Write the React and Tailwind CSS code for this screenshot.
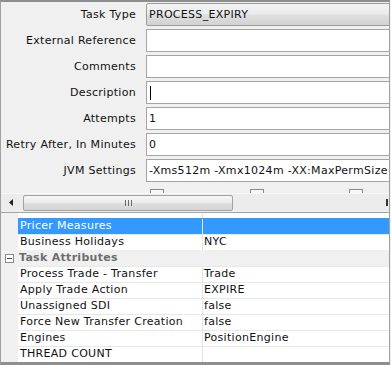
import React from "react";

const font = { fontFamily: '"DejaVu Sans", Verdana, sans-serif' };

const formRows = [
  { label: "Task Type", type: "combo", value: "PROCESS_EXPIRY" },
  { label: "External Reference", value: "" },
  { label: "Comments", value: "" },
  { label: "Description", value: "", cursor: true },
  { label: "Attempts", value: "1" },
  { label: "Retry After, In Minutes", value: "0" },
  { label: "JVM Settings", value: "-Xms512m -Xmx1024m -XX:MaxPermSize=256m" },
];

const tableRows = [
  { name: "Pricer Measures", value: "", selected: true },
  { name: "Business Holidays", value: "NYC" },
  { category: "Task Attributes" },
  { name: "Process Trade - Transfer", value: "Trade" },
  { name: "Apply Trade Action", value: "EXPIRE" },
  { name: "Unassigned SDI", value: "false" },
  { name: "Force New Transfer Creation", value: "false" },
  { name: "Engines", value: "PositionEngine" },
  { name: "THREAD COUNT", value: "" },
];

function FormRow({ row }) {
  return (
    <div className="flex items-center h-[23px]">
      <div className="w-[135px] shrink-0 text-right text-[11px] tracking-[0.3px] text-[#111] whitespace-nowrap pt-[2px]">
        {row.label}
      </div>
      <div className="ml-[10px] flex-1 h-[23px] min-w-0">
        {row.type === "combo" ? (
          <div className="h-full w-[260px] border border-[#9c9c9c] rounded-[2px] bg-[linear-gradient(#f3f3f3_0%,#ececec_45%,#dedede_55%,#d2d2d2_100%)] flex items-center pl-[2px] pt-[2px] text-[11px] tracking-[0.3px] text-[#111] whitespace-nowrap">
            {row.value}
          </div>
        ) : (
          <div className="h-full w-[260px] border border-[#a5a5a5] bg-white flex items-center pl-[2px] pt-[2px] text-[11px] tracking-[0.3px] text-[#111] whitespace-nowrap overflow-hidden">
            {row.cursor && <div className="w-[1px] h-[14px] bg-black ml-[1px] -mt-[2px]" />}
            {row.value}
          </div>
        )}
      </div>
    </div>
  );
}

function TableRow({ row }) {
  if (row.category) {
    return (
      <div className="h-[16px] flex items-center bg-[#f0f0f0]">
        <div className="w-[17px] shrink-0 flex items-center justify-center">
          <div className="w-[9px] h-[9px] border border-[#8a8a8a] bg-white flex items-center justify-center">
            <div className="w-[5px] h-[1px] bg-[#4a4a4a]" />
          </div>
        </div>
        <div className="text-[11px] tracking-[0.3px] font-bold text-[#6e6e6e] whitespace-nowrap pl-[1px]">
          {row.category}
        </div>
      </div>
    );
  }
  const sel = row.selected;
  return (
    <div className="h-[16px] flex">
      <div className="w-[17px] shrink-0 bg-[#f0f0f0]" />
      <div
        className={
          "flex-1 flex border-t " +
          (sel ? "bg-[#3399ff] border-[#3399ff] text-white" : "bg-white border-[#e8e8e8] text-[#111]")
        }
      >
        <div
          className={
            "w-[185px] shrink-0 border-r flex items-center pl-[2px] text-[11px] tracking-[0.3px] whitespace-nowrap overflow-hidden " +
            (sel ? "border-[#d6e9ff]" : "border-[#e3e3e3]")
          }
        >
          {row.name}
        </div>
        <div className="flex-1 flex items-center pl-[1px] text-[11px] tracking-[0.3px] whitespace-nowrap overflow-hidden">
          {row.value}
        </div>
      </div>
    </div>
  );
}

export default function App() {
  return (
    <div className="w-[391px] h-[365px] bg-[#f0f0f0] overflow-hidden" style={font}>
      <div className="w-[390px] h-[365px] flex flex-col border-l border-r border-t-2 border-b-[3px] border-l-[#a0a0a0] border-r-[#a0a0a0] border-t-[#8e8e8e] border-b-[#8e8e8e] overflow-hidden">
        {/* form */}
        <div className="flex flex-col gap-[3px] pt-[1px] overflow-hidden">
          {formRows.map((r) => (
            <FormRow key={r.label} row={r} />
          ))}
        </div>
        {/* partially visible checkbox row */}
        <div className="h-[11px] shrink-0 overflow-hidden relative">
          <div className="flex pt-[7px]">
            <div className="ml-[149px] w-[14px] h-[14px] border border-[#8a8a8a] bg-[#f7f7f7]" />
            <div className="ml-[86px] w-[14px] h-[14px] border border-[#8a8a8a] bg-[#f7f7f7]" />
            <div className="ml-[85px] w-[14px] h-[14px] border border-[#8a8a8a] bg-[#f7f7f7]" />
          </div>
        </div>
        {/* horizontal scrollbar */}
        <div className="h-[18px] shrink-0 flex items-center bg-[#ececec] border-t border-[#f8f8f8]">
          <div className="w-[22px] h-full flex items-center justify-center">
            <svg width="6" height="7" viewBox="0 0 6 7">
              <path d="M4 0 L0 3.5 L4 7 Z" fill="#222" />
            </svg>
          </div>
          <div className="w-[210px] h-[16px] rounded-[2px] border border-[#a2a2a2] bg-[linear-gradient(#f5f5f5_0%,#ececec_45%,#dedede_55%,#d4d4d4_100%)] flex items-center justify-center gap-[2px]">
            <div className="w-[1px] h-[6px] bg-[#6a6a6a]" />
            <div className="w-[1px] h-[6px] bg-[#6a6a6a]" />
            <div className="w-[1px] h-[6px] bg-[#6a6a6a]" />
          </div>
          <div className="flex-1" />
          <div className="w-[2px] h-[7px] bg-[#333] mr-[1px]" />
        </div>
        {/* splitter */}
        <div className="h-[1px] shrink-0 bg-[#f0f0f0]" />
        <div className="h-[1px] shrink-0 bg-[#a3a3a3]" />
        {/* property table */}
        <div className="flex-1 flex flex-col overflow-hidden">
          <div className="h-[5px] shrink-0 flex">
            <div className="w-[17px] shrink-0 bg-[#f0f0f0]" />
            <div className="flex-1 bg-white flex">
              <div className="w-[185px] border-r border-[#e3e3e3]" />
            </div>
          </div>
          {tableRows.map((r, i) => (
            <TableRow key={i} row={r} />
          ))}
        </div>
      </div>
    </div>
  );
}
